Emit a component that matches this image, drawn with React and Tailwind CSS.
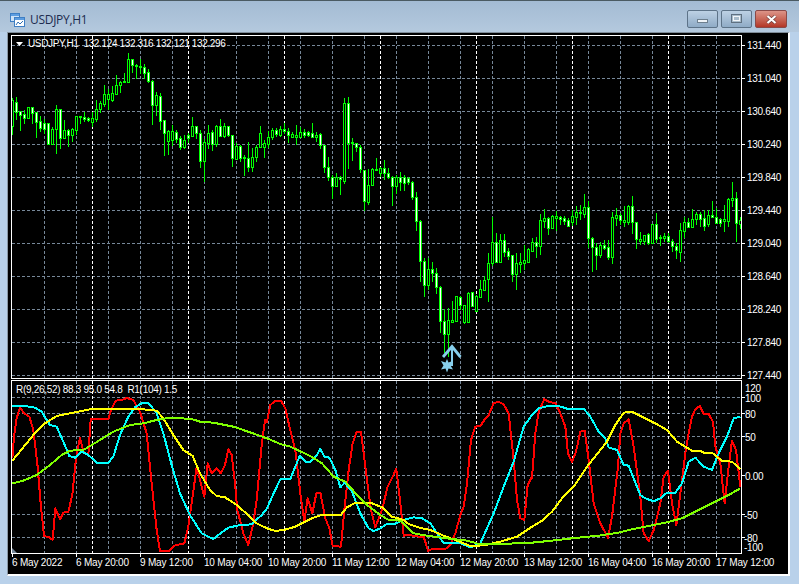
import React from "react";

// candle rows: [high, bodyTop, bodyBottom, low, filled], read off in 3x crop units
const candleGroups = [
  {
    x: 12,
    y: 50,
    rows: [
      [145,150,228,255,0],[142,155,185,210,1],[183,184,194,243,1],[180,193,203,222,1],[172,172,204,205,0],
      [170,172,188,222,1],[185,187,215,264,1],[198,214,233,246,1],[208,220,236,252,1],[220,220,283,284,1],
      [232,238,283,285,0],[166,178,238,312,0],[176,178,263,296,1],[210,240,263,264,0],[238,240,254,290,1],
      [235,238,254,276,0],[198,198,240,255,0],[198,199,201,222,0],[186,200,208,216,1],[200,205,209,215,1],
      [185,205,215,230,0],[150,176,206,216,0],[152,160,176,190,0],[106,133,161,170,0],[118,133,148,180,0],
      [108,130,150,155,0],[75,106,131,133,0],[92,96,104,130,0],[70,93,97,98,0],[10,28,95,95,0],
      [28,28,46,68,1],[42,45,47,86,0],[28,47,52,72,0],[42,52,68,86,1],[56,67,92,100,1],
      [90,92,164,225,1],[125,136,164,198,0],[130,138,212,240,1],[210,211,248,318,1],[240,243,272,315,0],
      [225,243,270,288,0],[240,246,266,278,1],[258,264,292,300,1],[255,270,292,298,0],[250,256,263,280,1],
      [202,228,257,262,0],[228,229,250,268,1],[240,250,334,355,1],[268,276,334,395,0],[225,248,278,298,0],
      [240,246,283,302,1],[225,229,283,290,0],[208,229,258,262,1],[218,229,258,265,0],[232,229,256,262,1],
      [255,256,325,350,1],[278,288,326,330,0],[285,289,323,335,1],[315,322,325,378,0],[275,325,350,365,1],
      [295,322,350,365,0],[285,290,320,335,0],
    ],
  },
  {
    x: 260,
    y: 90,
    rows: [
      [108,130,170,172,0],[150,160,172,203,0],[123,142,163,175,0],[113,120,140,150,0],[113,121,131,140,1],
      [108,118,135,140,0],[100,118,122,133,1],[115,122,136,158,1],[125,133,140,145,0],[105,134,140,165,0],
      [110,127,140,145,0],[118,126,136,143,1],[122,125,136,140,1],[100,128,140,145,1],[125,136,140,155,0],
      [128,133,166,177,1],[165,166,232,250,1],[202,230,260,272,1],[255,260,287,328,1],[248,262,287,290,0],
      [258,262,268,315,1],[25,40,272,282,0],[22,38,160,236,1],[145,155,160,212,0],[158,160,172,185,1],
      [165,172,238,250,1],[240,241,333,363,1],[238,284,335,345,0],[235,237,284,287,0],[205,236,238,244,0],
      [232,233,248,262,0],[210,235,248,270,1],[235,248,262,268,1],[258,262,287,348,1],[255,260,288,312,0],
      [246,260,277,303,1],[255,262,278,303,1],[262,265,277,285,1],[272,277,320,330,1],[307,320,394,422,1],
      [390,394,512,575,1],[503,512,584,620,1],[503,538,584,600,0],[515,538,550,575,1],[533,550,590,612,1],
      [588,590,692,730,1],[658,692,732,790,1],[655,690,732,800,0],[632,690,696,695,0],[618,618,692,695,0],
      [618,620,645,660,1],[645,645,695,702,0],[607,610,695,695,0],[605,607,647,648,1],[615,617,662,662,0],
      [570,598,620,622,0],[558,570,600,602,0],[490,518,568,635,0],[380,455,518,528,0],[430,455,515,518,1],
    ],
  },
  {
    x: 500,
    y: 170,
    rows: [
      [192,210,275,278,0],[192,210,245,260,1],[235,244,258,270,1],[255,256,311,336,1],[250,280,311,360,0],
      [250,277,282,310,0],[225,270,278,300,0],[235,237,275,278,0],[205,216,242,245,0],[200,217,227,265,1],
      [132,150,227,255,0],[118,144,152,175,0],[140,145,173,195,1],[135,138,173,177,0],[122,138,144,183,0],
      [138,141,146,165,1],[138,145,152,165,1],[145,150,167,170,1],[120,138,155,168,0],[108,126,140,165,0],
      [105,126,128,150,0],[72,112,132,145,0],[93,112,205,235,1],[200,205,232,305,1],[220,232,254,300,1],
      [215,225,255,265,0],[210,226,233,240,1],[210,232,260,270,1],[125,142,260,282,0],[115,135,143,168,0],
      [130,136,150,165,1],[108,150,155,170,0],[105,108,155,165,0],[78,108,157,192,1],[155,157,208,236,1],
      [187,208,213,225,0],[195,195,213,226,0],[190,192,218,225,1],[162,162,220,222,0],[130,162,207,220,1],
      [195,200,205,228,0],[190,198,203,215,0],[190,197,214,220,1],[208,212,228,245,1],[220,228,240,268,1],
      [158,180,245,276,0],[140,157,182,205,0],[145,157,170,175,1],[118,148,170,175,0],[125,132,148,165,0],
      [125,133,147,170,1],[120,145,167,182,1],[120,134,163,170,0],[92,134,140,145,1],[115,140,160,162,1],
      [145,148,160,170,1],[105,148,152,185,0],[85,88,152,170,0],[37,85,90,112,0],[67,85,158,215,1],[140,150,162,178,0],
    ],
  },
];

const candles = candleGroups.flatMap((g) =>
  g.rows.map(([h, t, b, l, filled], i) => ({
    x: g.x + i * 4,
    high: Math.round(g.y + h / 3),
    top: Math.round(g.y + t / 3),
    bottom: Math.round(g.y + b / 3),
    low: Math.round(g.y + l / 3),
    filled,
  }))
);

const toPoints = (segs) =>
  segs
    .flatMap(([ox, pts]) => pts.map(([x, y]) => `${ox + x / 3},${370 + y / 3}`))
    .join(" ");

const redLine = toPoints([
  [0, [[37,265],[42,200],[50,145],[60,112],[72,130],[88,140],[100,180],[112,280],[122,400],[132,498],[148,502],[158,510],[166,415],[180,448],[190,428],[205,425],[217,375],[228,265],[240,203],[250,245],[265,255],[272,148],[300,147],[325,147],[333,120],[347,92],[365,90],[380,84],[400,90],[420,125],[440,190],[455,340],[470,480],[480,543],[508,543],[522,527],[553,520],[565,470],[575,400],[590,290],[600,330],[613,380],[623,280],[635,310],[650,295],[662,310],[675,285],[685,238],[695,255],[705,340],[712,420],[730,490],[745,525],[760,460],[770,390],[785,225],[795,150]]],
  [267, [[0,155],[10,105],[25,92],[42,92],[55,115],[72,190],[85,240],[100,370],[112,455],[122,385],[136,430],[148,370],[160,368],[175,445],[187,475],[197,528],[222,530],[232,420],[245,300],[257,220],[268,187],[282,187],[300,330],[312,420],[325,472],[345,420],[362,350],[388,297],[400,400],[410,497],[428,495],[455,500],[470,500],[483,542],[500,536],[535,537],[550,525],[565,490],[580,435],[590,410],[600,340],[612,210],[625,170],[640,168],[652,150],[665,135],[680,100],[695,95],[710,103],[725,130],[740,270],[750,390],[760,445],[772,450],[782,345],[795,320]]],
  [532, [[0,325],[10,190],[20,125],[37,87],[50,95],[70,100],[85,130],[100,170],[108,250],[120,277],[132,245],[145,185],[158,182],[170,270],[185,400],[205,460],[228,503],[240,440],[258,290],[265,190],[275,160],[290,148],[305,230],[325,380],[335,490],[350,513],[365,480],[385,400],[395,320],[408,302],[420,400],[433,465],[445,370],[460,250],[470,190],[480,140],[490,118],[503,108],[515,132],[530,132],[543,155],[550,230],[565,280],[578,400],[590,290],[600,212],[612,240],[625,350]]],
]);

const cyanLine = toPoints([
  [0, [[37,108],[75,108],[105,113],[125,125],[150,165],[170,170],[190,215],[208,258],[225,263],[245,245],[265,255],[290,278],[325,278],[340,260],[360,195],[385,140],[405,112],[425,100],[445,98],[470,130],[490,190],[515,285],[540,370],[570,435],[605,490],[640,507],[655,495],[685,473],[720,465],[755,463],[785,435]]],
  [267, [[0,415],[20,370],[40,328],[70,327],[98,258],[115,275],[130,275],[148,258],[160,237],[172,260],[187,263],[205,300],[220,352],[233,338],[255,365],[280,430],[305,475],[320,483],[340,475],[360,462],[380,463],[410,450],[440,442],[465,445],[490,460],[530,520],[580,520],[610,532],[640,520],[680,430],[710,350],[740,275],[770,170],[795,135]]],
  [532, [[0,135],[20,115],[45,109],[80,108],[105,116],[155,116],[175,140],[200,185],[220,205],[230,232],[255,240],[275,285],[290,287],[325,375],[340,385],[365,394],[385,385],[405,368],[430,368],[450,340],[470,275],[490,263],[515,290],[540,300],[560,250],[585,200],[605,145],[625,140]]],
]);

const yellowLine = toPoints([
  [0, [[37,272],[70,232],[100,195],[135,160],[170,138],[200,132],[250,122],[275,117],[330,117],[430,118],[470,122],[490,145],[520,195],[550,240],[578,258],[600,310],[630,360],[650,378],[675,382],[710,405],[750,440],[770,460]]],
  [267, [[0,475],[25,483],[50,480],[85,470],[130,447],[165,434],[222,434],[240,412],[265,398],[310,398],[345,412],[375,440],[410,450],[425,462],[460,474],[490,480],[530,497],[570,512],[610,528],[650,526],[700,515],[750,500],[795,470]]],
  [532, [[0,470],[30,452],[60,425],[90,385],[125,350],[165,290],[225,215],[250,165],[275,128],[300,125],[330,140],[370,160],[405,180],[435,215],[480,242],[505,243],[520,250],[540,248],[570,273],[600,275],[625,297]]],
]);

const greenLine = toPoints([
  [0, [[37,340],[70,332],[110,315],[150,285],[185,255],[210,242],[250,240],[300,210],[340,185],[390,165],[430,160],[470,150],[510,143],[575,147],[600,155],[640,158],[700,170],[750,187]]],
  [267, [[0,205],[40,222],[70,230],[130,258],[165,280],[200,320],[235,335],[270,375],[300,405],[340,435],[365,450],[400,452],[440,490],[480,497],[540,505],[600,512],[640,523],[700,522],[795,518]]],
  [532, [[0,518],[60,512],[120,505],[200,497],[260,488],[300,478],[350,468],[400,458],[450,445],[500,420],[550,395],[590,375],[625,355]]],
]);

const prices = ["131.440","131.040","130.640","130.240","129.840","129.440","129.040","128.640","128.240","127.840","127.440"];
const priceLines = [45,78,111,144,177,210,243,276,309,342,375];
const timeLabels = ["6 May 2022","6 May 20:00","9 May 12:00","10 May 04:00","10 May 20:00","11 May 12:00","12 May 04:00","12 May 20:00","13 May 12:00","16 May 04:00","16 May 20:00","17 May 12:00"];
const greyLines = Array.from({ length: 22 }, (_, i) => 44 + i * 32);
const dayLines = [92,188,284,380,476,572,668];
const indLines = [397,413,436,475,514,537];
const indLabels = [
  { t: "120", x: 3, y: 388 },
  { t: "100", x: 3, y: 398 },
  { t: "80", x: 3, y: 414 },
  { t: "50", x: 3, y: 437 },
  { t: "0.00", x: 3, y: 476 },
  { t: "-50", x: 2, y: 515 },
  { t: "-80", x: 2, y: 538 },
  { t: "-100", x: 2, y: 547 },
];

const Grid = ({ hLines, top, bottom }) => (
  <g shapeRendering="crispEdges" strokeWidth="1">
    {greyLines.map((x) => (
      <line key={x} x1={x + 0.5} x2={x + 0.5} y1={top} y2={bottom} stroke="#778899" strokeDasharray="3 2" />
    ))}
    {hLines.map((y) => (
      <line key={y} x1="12" x2="741" y1={y + 0.5} y2={y + 0.5} stroke="#778899" strokeDasharray="3 2" />
    ))}
    {dayLines.map((x) => (
      <line key={x} x1={x + 0.5} x2={x + 0.5} y1={top} y2={bottom} stroke="#ffffff" strokeDasharray="3 2" />
    ))}
  </g>
);

const WindowButton = ({ children, className }) => (
  <div className={`h-[18px] flex items-center justify-center rounded-[2px] border border-[#5d7388] ${className}`}>
    {children}
  </div>
);

export default function App() {
  return (
    <div className="w-[799px] h-[584px] flex flex-col overflow-hidden bg-[#b9d1ea] border-t border-[#4a5a62] [font-family:'Liberation_Sans',sans-serif]">
      <div className="h-[31px] shrink-0 flex items-start justify-between pl-[10px] pr-[12px] pt-[9px] bg-gradient-to-b from-[#a3bbd3] to-[#b4c9de]">
        <div className="flex items-center gap-[5px] pt-[3px]">
          <svg width="15" height="14" viewBox="0 0 15 14" shapeRendering="crispEdges">
            <rect x="0.5" y="0.5" width="9" height="8" fill="#cfe3f7" stroke="#3f7fc4" />
            <rect x="1" y="1" width="8" height="2" fill="#5d9de0" />
            <rect x="4.5" y="4.5" width="10" height="9" fill="#ffffff" stroke="#3f7fc4" />
            <rect x="5" y="5" width="9" height="2" fill="#5d9de0" />
            <path d="M6 12 L8 9 L10 11 L13 8" fill="none" stroke="#2f6fb4" shapeRendering="auto" />
          </svg>
          <span className="text-[12px] leading-[14px] tracking-[-0.3px] text-[#1c2b4e] [font-family:'Open_Sans',sans-serif]">USDJPY,H1</span>
        </div>
        <div className="flex gap-[3px]">
          <WindowButton className="w-[31px] bg-gradient-to-b from-[#bdd1e4] to-[#8fabc6]">
            <div className="w-[11px] h-[4px] mt-[3px] bg-[#eef3f7] border border-[#6d7f8e]" />
          </WindowButton>
          <WindowButton className="w-[31px] bg-gradient-to-b from-[#bdd1e4] to-[#8fabc6]">
            <div className="w-[11px] h-[9px] mb-[1px] border border-[#5f7080] bg-[#a9bccb] flex items-center justify-center">
              <div className="w-[7px] h-[5px] border border-[#f2f5f8] bg-[#a9bccb]" />
            </div>
          </WindowButton>
          <WindowButton className="w-[32px] border-[#8a4a48] bg-gradient-to-b from-[#dc9488] to-[#b33526]">
            <svg width="11" height="9" viewBox="0 0 11 9">
              <path d="M1.5 1 L9.5 8 M9.5 1 L1.5 8" stroke="#6b3a38" strokeWidth="3.4" />
              <path d="M1.5 1 L9.5 8 M9.5 1 L1.5 8" stroke="#ffffff" strokeWidth="2.2" />
            </svg>
          </WindowButton>
        </div>
      </div>

      <div className="flex-1 flex pl-[7px] pr-[9px] pb-[8px]">
        <div className="flex-1 flex flex-col bg-black border-l border-t border-r-2 border-b-2 border-l-[#8a98a6] border-t-[#7f8c98] border-r-white border-b-white pl-[3px] pt-[2px]">
          <div className="flex h-[344px]">
            <div className="relative w-[731px] border border-white">
              <svg className="block" width="729" height="342" viewBox="12 36 729 342">
                <Grid hLines={priceLines} top={36} bottom={378} />
                <g shapeRendering="crispEdges">
                  {candles.map((c) => (
                    <g key={c.x}>
                      <line x1={c.x + 0.5} x2={c.x + 0.5} y1={c.high} y2={c.low} stroke="#00ff00" />
                      <rect x={c.x - 0.5} y={c.top + 0.5} width="2" height={Math.max(c.bottom - c.top, 1)} fill={c.filled ? "#ffffff" : "#000000"} stroke="#00ff00" />
                    </g>
                  ))}
                </g>
                <g fill="none" stroke="#87ceeb">
                  <path d="M443 357 L452 346.5 L460.5 357" strokeWidth="2.8" />
                  <path d="M452 347 L452 365 L447 365" strokeWidth="2" />
                </g>
                <path d="M447 359 L448.5 362.5 L452.5 361 L450.5 365.5 L453 369.5 L448.5 368.5 L447 372.5 L445.5 368.5 L441 369.5 L443.5 365.5 L441 361 L445.5 362.5 Z" fill="#87ceeb" />
              </svg>
              <div className="absolute left-[4px] top-[2px] flex items-center text-[10px] leading-[12px] tracking-[-0.35px] text-white whitespace-pre">
                <svg className="mr-[5px]" width="7" height="4" viewBox="0 0 7 4">
                  <path d="M0 0 H7 L3.5 4 Z" fill="#ffffff" />
                </svg>
                USDJPY,H1  132.124 132.316 132.121 132.296
              </div>
            </div>
            <div className="flex-1 flex flex-col -mt-[6px]">
              {prices.map((p) => (
                <div key={p} className="h-[33px] flex items-center shrink-0">
                  <div className="w-[3px] h-px bg-white" />
                  <span className="ml-[2px] text-[10px] leading-[12px] tracking-[-0.3px] text-white">{p}</span>
                </div>
              ))}
            </div>
          </div>

          <div className="flex h-[174px] mt-px">
            <div className="relative w-[731px] border border-white">
              <svg className="block" width="729" height="172" viewBox="12 381 729 172">
                <Grid hLines={indLines} top={381} bottom={553} />
                <g fill="none" strokeWidth="2" strokeLinejoin="round" shapeRendering="crispEdges">
                  <polyline points={redLine} stroke="#ff0000" />
                  <polyline points={cyanLine} stroke="#00ffff" />
                  <polyline points={yellowLine} stroke="#ffff00" />
                  <polyline points={greenLine} stroke="#7fff00" />
                </g>
                <path d="M12 548 L17 553 H12 Z" fill="#778899" />
              </svg>
              <div className="absolute left-[4px] top-[3px] text-[10px] leading-[12px] tracking-[-0.3px] text-white whitespace-pre">
                R(9,26,52) 88.3 95.0 54.8  R1(104) 1.5
              </div>
            </div>
            <svg className="block" width="46" height="174" viewBox="0 380 46 174">
              {indLines.map((y) => (
                <rect key={y} x="0" y={y} width="3" height="1" fill="#ffffff" />
              ))}
              {indLabels.map((l) => (
                <text key={l.t} x={l.x} y={l.y + 4} fill="#ffffff" fontSize="10" letterSpacing="-0.3">
                  {l.t}
                </text>
              ))}
            </svg>
          </div>

          <div className="flex flex-1 pl-px">
            {timeLabels.map((t) => (
              <div key={t} className="w-16 shrink-0 flex flex-col whitespace-nowrap text-[10px] leading-[12px] tracking-[-0.2px] text-white">
                <div className="w-px h-[3px] bg-white" />
                <span>{t}</span>
              </div>
            ))}
          </div>
        </div>
      </div>
    </div>
  );
}
